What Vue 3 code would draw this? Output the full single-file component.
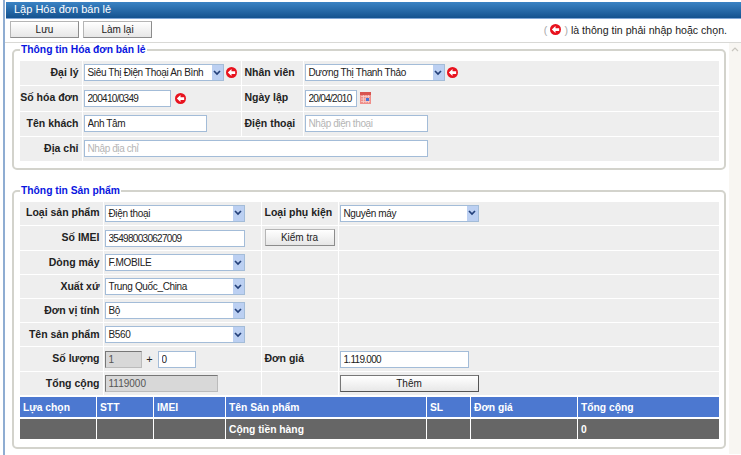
<script setup>
const headers = ['Lựa chọn', 'STT', 'IMEI', 'Tên Sản phẩm', 'SL', 'Đơn giá', 'Tổng cộng']
const totals = ['', '', '', 'Cộng tiền hàng', '', '', '0']
const pickers = [
  { label: 'Dòng máy', value: 'F.MOBILE' },
  { label: 'Xuất xứ', value: 'Trung Quốc_China' },
  { label: 'Đơn vị tính', value: 'Bộ' },
  { label: 'Tên sản phẩm', value: 'B560' },
]
</script>

<template>
  <div class="page">
    <div class="title">Lập Hóa đơn bán lẻ</div>

    <div class="toolbar">
      <button class="btn">Lưu</button>
      <button class="btn">Làm lại</button>
      <div class="note">
        <span class="paren">(</span>
        <svg class="req" viewBox="0 0 12 12"><circle cx="6" cy="6" r="6" fill="#e8121e" /><path d="M2 6 6 2.200v2.300h4v3H6v2.300z" fill="#fff" /></svg>
        <span class="paren">)</span>
        là thông tin phải nhập hoặc chọn.
      </div>
    </div>

    <div class="content">
      <div class="main">
        <fieldset class="box">
          <legend>Thông tin Hóa đơn bán lẻ</legend>
          <table class="form form-bill">
            <colgroup><col class="a1" /><col class="a2" /><col class="a3" /><col /></colgroup>
            <tr class="r1">
              <th>Đại lý</th>
              <td>
                <div class="line">
                  <div class="select w140"><span>Siêu Thị Điện Thoại An Bình</span><i class="arrow"><svg viewBox="0 0 8 6"><path d="M1 1l3 3 3-3" fill="none" stroke="#23407a" stroke-width="1.700" /></svg></i></div>
                  <svg class="req" viewBox="0 0 12 12"><circle cx="6" cy="6" r="6" fill="#e8121e" /><path d="M2 6 6 2.200v2.300h4v3H6v2.300z" fill="#fff" /></svg>
                </div>
              </td>
              <th class="left">Nhân viên</th>
              <td>
                <div class="line">
                  <div class="select w140"><span>Dương Thị Thanh Thảo</span><i class="arrow"><svg viewBox="0 0 8 6"><path d="M1 1l3 3 3-3" fill="none" stroke="#23407a" stroke-width="1.700" /></svg></i></div>
                  <svg class="req" viewBox="0 0 12 12"><circle cx="6" cy="6" r="6" fill="#e8121e" /><path d="M2 6 6 2.200v2.300h4v3H6v2.300z" fill="#fff" /></svg>
                </div>
              </td>
            </tr>
            <tr class="r2">
              <th>Số hóa đơn</th>
              <td>
                <div class="line">
                  <input class="w87 num" value="200410/0349" />
                  <svg class="req gap" viewBox="0 0 12 12"><circle cx="6" cy="6" r="6" fill="#e8121e" /><path d="M2 6 6 2.200v2.300h4v3H6v2.300z" fill="#fff" /></svg>
                </div>
              </td>
              <th class="left">Ngày lập</th>
              <td>
                <div class="line">
                  <input class="w52 num" value="20/04/2010" />
                  <svg class="cal" viewBox="0 0 11 12">
                    <rect width="11" height="12" fill="#ef8f8a" />
                    <rect y="0" width="11" height="3" fill="#d9534f" />
                    <path d="M1 4.500h9M1 7h9M1 9.500h9M3.500 3v8M6 3v8M8.500 3v8" stroke="#f8cfcc" stroke-width=".8" />
                    <rect x="6" y="6" width="3" height="3" fill="#4a74d6" />
                  </svg>
                </div>
              </td>
            </tr>
            <tr class="r3">
              <th>Tên khách</th>
              <td><input class="w123" value="Anh Tâm" /></td>
              <th class="left">Điện thoại</th>
              <td><input class="w123" placeholder="Nhập điện thoại" /></td>
            </tr>
            <tr class="r4">
              <th>Địa chỉ</th>
              <td colspan="3"><input class="w344" placeholder="Nhập địa chỉ" /></td>
            </tr>
          </table>
        </fieldset>

        <fieldset class="box second">
          <legend>Thông tin Sản phẩm</legend>
          <table class="form form-product">
            <colgroup><col class="b1" /><col class="b2" /><col class="b3" /><col /></colgroup>
            <tr class="h24">
              <th>Loại sản phẩm</th>
              <td><div class="select w140"><span>Điện thoại</span><i class="arrow"><svg viewBox="0 0 8 6"><path d="M1 1l3 3 3-3" fill="none" stroke="#23407a" stroke-width="1.700" /></svg></i></div></td>
              <th class="left">Loại phụ kiện</th>
              <td><div class="select w139"><span>Nguyên máy</span><i class="arrow"><svg viewBox="0 0 8 6"><path d="M1 1l3 3 3-3" fill="none" stroke="#23407a" stroke-width="1.700" /></svg></i></div></td>
            </tr>
            <tr class="h25">
              <th>Số IMEI</th>
              <td><input class="w140 num" value="354980030627009" /></td>
              <th class="left"><button class="btn small">Kiểm tra</button></th>
              <td></td>
            </tr>
            <tr v-for="p in pickers" :key="p.label" class="h24">
              <th>{{ p.label }}</th>
              <td><div class="select w140"><span>{{ p.value }}</span><i class="arrow"><svg viewBox="0 0 8 6"><path d="M1 1l3 3 3-3" fill="none" stroke="#23407a" stroke-width="1.700" /></svg></i></div></td>
              <th></th>
              <td></td>
            </tr>
            <tr class="h25">
              <th>Số lượng</th>
              <td>
                <div class="line">
                  <input class="w37 off" value="1" disabled />
                  <span class="plus">+</span>
                  <input class="w38" value="0" />
                </div>
              </td>
              <th class="left">Đơn giá</th>
              <td><input class="w129 num" value="1.119.000" /></td>
            </tr>
            <tr class="h24">
              <th>Tổng cộng</th>
              <td><input class="w113 off" value="1119000" disabled /></td>
              <th></th>
              <td><button class="add">Thêm</button></td>
            </tr>
          </table>

          <div class="grid head">
            <div v-for="h in headers" :key="h">{{ h }}</div>
          </div>
          <div class="grid foot">
            <div v-for="(t, i) in totals" :key="i">{{ t }}</div>
          </div>
        </fieldset>
      </div>

      <div class="scroll">
        <svg viewBox="0 0 8 5"><path d="M1 4l3-3 3 3" fill="none" stroke="#c9c7c0" stroke-width="1.200" /></svg>
      </div>
    </div>
  </div>
</template>

<style scoped>
.page {
  width: 736px;
  height: 455px;
  margin-left: 3px;
  border-left: 2px solid #8fadd2;
  overflow: hidden;
  font-family: "Liberation Sans", Arial, sans-serif;
  font-size: 11px;
  color: #222;
}

.title {
  height: 16px;
  margin: 2px 0 0 1px;
  padding-left: 8px;
  line-height: 15px;
  font-size: 11px;
  color: #fff;
  background: linear-gradient(#3b83c4, #14528f);
  border-bottom: 1px solid #7fa6d6;
}

.toolbar {
  display: flex;
  align-items: center;
  height: 24px;
  padding: 0 14px 2px 5px;
  gap: 4px;
  border-bottom: 1px solid #d9d9d6;
  box-sizing: border-box;
}

.btn {
  width: 69px;
  height: 17px;
  padding: 0;
  font: 10px "Liberation Sans", Arial, sans-serif;
  color: #222;
  background: linear-gradient(#fff, #e6e6e6);
  border: 1px solid #b5b5b5;
  border-right-color: #8c8c8c;
  border-bottom-color: #8c8c8c;
}

.btn.small {
  display: block;
  width: 70px;
}

.note {
  margin-left: auto;
  display: flex;
  align-items: center;
  gap: 3px;
  font-size: 10.600px;
}

.paren {
  color: #aaa;
}

.content {
  display: flex;
}

.main {
  width: 724px;
  padding-left: 7px;
  box-sizing: border-box;
}

.box {
  width: 714px;
  margin: 0;
  padding: 4px 4px 6px 6px;
  box-sizing: border-box;
  border: 2px solid #d3d3cc;
  border-radius: 5px;
  min-width: 0;
}

.box.second {
  margin-top: 14px;
  padding-bottom: 8px;
}

.box legend {
  padding: 0 1px;
  color: #0a16e0;
  font: bold 10.300px/14px "Liberation Sans", sans-serif;
}

.form {
  width: 700px;
  table-layout: fixed;
  border-collapse: collapse;
}

.form th,
.form td {
  padding: 0;
  background: #eee;
  border: 1px solid #fff;
  border-width: 0 1px 1px 0;
  vertical-align: middle;
}

.form th {
  padding-right: 3px;
  padding-bottom: 2px;
  text-align: right;
  white-space: nowrap;
  font: bold 10.500px "Liberation Sans", sans-serif;
  color: #222;
  box-sizing: border-box;
}

.form th.left {
  padding: 0 0 2px 3px;
  text-align: left;
}

.form td {
  padding-left: 1px;
}

.a1 { width: 62px; }
.a2 { width: 159px; }
.a3 { width: 62px; }
.b1 { width: 83px; }
.b2 { width: 158px; }
.b3 { width: 77px; }

.r1 { height: 24px; }
.r2 { height: 26px; }
.r3 { height: 25px; }
.r4 { height: 25px; }
.h24 { height: 24px; }
.h25 { height: 25px; }

.line {
  display: flex;
  align-items: center;
}

.req {
  width: 11px;
  height: 11px;
  flex: none;
}

.line .req {
  margin-left: 2px;
}

.line .req.gap {
  margin-left: 4px;
}

.cal {
  width: 11px;
  height: 12px;
  margin-left: 3px;
}

input,
.select {
  display: block;
  height: 17px;
  box-sizing: border-box;
  border: 1px solid #a3bcd8;
  background: #fff;
  font: 10px "Liberation Sans", Arial, sans-serif;
  letter-spacing: -0.35px;
  color: #222;
}

input {
  padding: 0 1px 0 3px;
  outline: none;
  letter-spacing: -0.4px;
}

input.num {
  letter-spacing: -0.7px;
}

input::placeholder {
  color: #b5b5b5;
}

input.off {
  background: #d8d8d8;
  border: 1px solid #777;
  border-right-color: #bbb;
  border-bottom-color: #bbb;
  color: #555;
  letter-spacing: 0;
}

.select {
  display: flex;
  align-items: center;
  justify-content: space-between;
  padding-left: 3px;
}

.arrow {
  display: flex;
  align-items: center;
  justify-content: center;
  width: 11px;
  height: 15px;
  background: #bcd0f2;
}

.arrow svg {
  width: 8px;
  height: 6px;
}

.w37 { width: 37px; }
.w38 { width: 38px; }
.w52 { width: 52px; }
.w87 { width: 87px; }
.w113 { width: 113px; }
.w123 { width: 123px; }
.w129 { width: 129px; }
.w139 { width: 139px; }
.w140 { width: 140px; }
.w344 { width: 344px; }

.plus {
  width: 16px;
  text-align: center;
}

.add {
  display: block;
  width: 139px;
  height: 17px;
  padding: 0;
  font: 10px "Liberation Sans", Arial, sans-serif;
  color: #222;
  background: linear-gradient(#fff, #e8e8e8);
  border: 1px solid #555;
  border-top-color: #777;
  border-left-color: #777;
}

.grid {
  display: grid;
  width: 700px;
  grid-template-columns: 77px 57px 72px 201px 44px 107px 142px;
  font: bold 10.300px "Liberation Sans", sans-serif;
  color: #fff;
}

.grid div {
  padding-left: 3px;
  box-sizing: border-box;
  border-right: 1px solid #fff;
}

.head {
  height: 20px;
  margin-top: 1px;
  line-height: 22px;
  background: #4c78d0;
}

.foot {
  height: 20px;
  margin-top: 2px;
  line-height: 22px;
  background: #666;
}

.scroll {
  flex: 1;
  height: 411px;
  background: #f8f6f2;
  text-align: center;
}

.scroll svg {
  display: block;
  width: 8px;
  height: 5px;
  margin: 4px auto 0;
}
</style>
